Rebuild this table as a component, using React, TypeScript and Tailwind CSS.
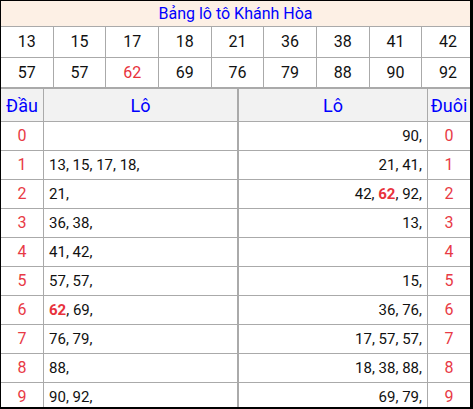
import React from "react";

const row1 = ["13", "15", "17", "18", "21", "36", "38", "41", "42"];
const row2 = ["57", "57", "62", "69", "76", "79", "88", "90", "92"];

const dau: string[][] = [
  [],
  ["13", "15", "17", "18"],
  ["21"],
  ["36", "38"],
  ["41", "42"],
  ["57", "57"],
  ["62", "69"],
  ["76", "79"],
  ["88"],
  ["90", "92"],
];
const duoi: string[][] = [
  ["90"],
  ["21", "41"],
  ["42", "62", "92"],
  ["13"],
  [],
  ["15"],
  ["36", "76"],
  ["17", "57", "57"],
  ["18", "38", "88"],
  ["69", "79"],
];

function Nums({ list }: { list: string[] }) {
  return (
    <span className="whitespace-pre">
      {list.map((n, i) => (
        <React.Fragment key={i}>
          {i > 0 ? " " : ""}
          {n === "62" ? (
            <span className="font-bold text-[#e8323c]">{n}</span>
          ) : (
            n
          )}
          {","}
        </React.Fragment>
      ))}
    </span>
  );
}

export default function App() {
  return (
    <div
      className="w-[473px] h-[409px] overflow-hidden border-black border-l border-t border-r-[3px] border-b-2 bg-white text-[#111]"
      style={{ fontFamily: "Roboto, 'Liberation Sans', sans-serif" }}
    >
      <div className="h-[26px] bg-[#fdf0e5] border-b border-[#aaaaaa] flex items-center justify-center text-[16px] text-[#0000ff]">
        Bảng lô tô Khánh Hòa
      </div>
      <div className="w-[474px] grid grid-cols-[repeat(9,52.67px)]">
        {row1.map((n, i) => (
          <div
            key={"a" + i}
            className="h-[31px] border-r border-b border-[#aaaaaa] flex items-center justify-center text-[16px]"
          >
            {n}
          </div>
        ))}
        {row2.map((n, i) => (
          <div
            key={"b" + i}
            className={
              "h-[31px] border-r border-b-2 border-[#aaaaaa] flex items-center justify-center text-[16px] " +
              (n === "62" ? "text-[#e8323c]" : "")
            }
          >
            {n}
          </div>
        ))}
      </div>
      <div className="grid grid-cols-[43px_195px_189px_42px]">
        <div className="h-[33px] bg-[#f2f2f2] border-r border-b border-[#aaaaaa] flex items-center justify-center text-[18px] text-[#0000ff]">
          Đầu
        </div>
        <div className="h-[33px] bg-[#f2f2f2] border-r-2 border-b border-[#aaaaaa] flex items-center justify-center text-[18px] text-[#0000ff]">
          Lô
        </div>
        <div className="h-[33px] bg-[#f2f2f2] border-r border-b border-[#aaaaaa] flex items-center justify-center text-[18px] text-[#0000ff]">
          Lô
        </div>
        <div className="h-[33px] bg-[#f2f2f2] border-b border-[#aaaaaa] flex items-center justify-center text-[18px] text-[#0000ff]">
          Đuôi
        </div>
        {dau.map((l, i) => (
          <React.Fragment key={i}>
            <div className="h-[29px] border-r border-b border-[#aaaaaa] flex items-center justify-center text-[16px] text-[#e83a45]">
              {i}
            </div>
            <div className="h-[29px] border-r-2 border-b border-[#aaaaaa] flex items-center justify-start px-[5px] text-[15px] whitespace-nowrap">
              <Nums list={l} />
            </div>
            <div className="h-[29px] border-r border-b border-[#aaaaaa] flex items-center justify-end px-[5px] text-[15px] whitespace-nowrap">
              <Nums list={duoi[i]} />
            </div>
            <div className="h-[29px] border-b border-[#aaaaaa] flex items-center justify-center text-[16px] text-[#e83a45]">
              {i}
            </div>
          </React.Fragment>
        ))}
      </div>
    </div>
  );
}
